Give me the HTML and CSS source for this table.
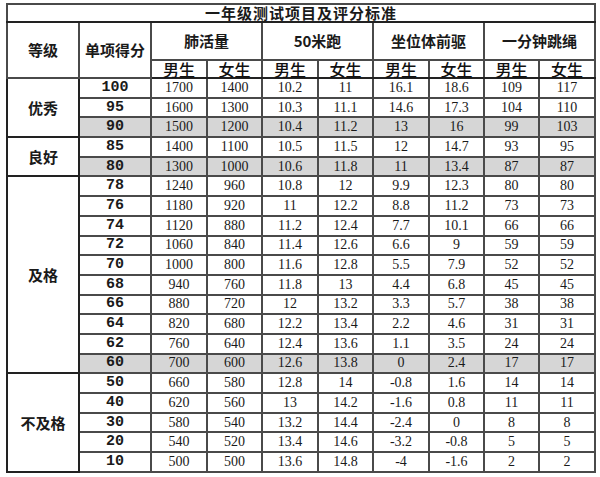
FILE: index.html
```html
<!DOCTYPE html>
<html lang="zh">
<head>
<meta charset="utf-8">
<title>一年级测试项目及评分标准</title>
<link rel="stylesheet" href="styles.css">
</head>
<body>
<table class="score">
  <colgroup>
    <col class="c-grade"><col class="c-score">
    <col class="c-a"><col class="c-b"><col class="c-a"><col class="c-b">
    <col class="c-a"><col class="c-b"><col class="c-b"><col class="c-a">
  </colgroup>
  <thead>
    <tr class="title"><th colspan="10">一年级测试项目及评分标准</th></tr>
    <tr class="h1">
      <th rowspan="2" class="hd">等级</th>
      <th rowspan="2" class="hd">单项得分</th>
      <th colspan="2" class="hd">肺活量</th>
      <th colspan="2" class="hd">50米跑</th>
      <th colspan="2" class="hd">坐位体前驱</th>
      <th colspan="2" class="hd">一分钟跳绳</th>
    </tr>
    <tr class="h2">
      <th>男生</th><th>女生</th><th>男生</th><th>女生</th>
      <th>男生</th><th>女生</th><th>男生</th><th>女生</th>
    </tr>
  </thead>
  <tbody>
    <tr><td rowspan="3" class="grade">优秀</td><td class="pts">100</td><td>1700</td><td>1400</td><td>10.2</td><td>11</td><td>16.1</td><td>18.6</td><td>109</td><td>117</td></tr>
    <tr><td class="pts">95</td><td>1600</td><td>1300</td><td>10.3</td><td>11.1</td><td>14.6</td><td>17.3</td><td>104</td><td>110</td></tr>
    <tr class="hl"><td class="pts">90</td><td>1500</td><td>1200</td><td>10.4</td><td>11.2</td><td>13</td><td>16</td><td>99</td><td>103</td></tr>
    <tr><td rowspan="2" class="grade">良好</td><td class="pts">85</td><td>1400</td><td>1100</td><td>10.5</td><td>11.5</td><td>12</td><td>14.7</td><td>93</td><td>95</td></tr>
    <tr class="hl"><td class="pts">80</td><td>1300</td><td>1000</td><td>10.6</td><td>11.8</td><td>11</td><td>13.4</td><td>87</td><td>87</td></tr>
    <tr><td rowspan="10" class="grade">及格</td><td class="pts">78</td><td>1240</td><td>960</td><td>10.8</td><td>12</td><td>9.9</td><td>12.3</td><td>80</td><td>80</td></tr>
    <tr><td class="pts">76</td><td>1180</td><td>920</td><td>11</td><td>12.2</td><td>8.8</td><td>11.2</td><td>73</td><td>73</td></tr>
    <tr><td class="pts">74</td><td>1120</td><td>880</td><td>11.2</td><td>12.4</td><td>7.7</td><td>10.1</td><td>66</td><td>66</td></tr>
    <tr><td class="pts">72</td><td>1060</td><td>840</td><td>11.4</td><td>12.6</td><td>6.6</td><td>9</td><td>59</td><td>59</td></tr>
    <tr><td class="pts">70</td><td>1000</td><td>800</td><td>11.6</td><td>12.8</td><td>5.5</td><td>7.9</td><td>52</td><td>52</td></tr>
    <tr><td class="pts">68</td><td>940</td><td>760</td><td>11.8</td><td>13</td><td>4.4</td><td>6.8</td><td>45</td><td>45</td></tr>
    <tr><td class="pts">66</td><td>880</td><td>720</td><td>12</td><td>13.2</td><td>3.3</td><td>5.7</td><td>38</td><td>38</td></tr>
    <tr><td class="pts">64</td><td>820</td><td>680</td><td>12.2</td><td>13.4</td><td>2.2</td><td>4.6</td><td>31</td><td>31</td></tr>
    <tr><td class="pts">62</td><td>760</td><td>640</td><td>12.4</td><td>13.6</td><td>1.1</td><td>3.5</td><td>24</td><td>24</td></tr>
    <tr class="hl"><td class="pts">60</td><td>700</td><td>600</td><td>12.6</td><td>13.8</td><td>0</td><td>2.4</td><td>17</td><td>17</td></tr>
    <tr><td rowspan="5" class="grade">不及格</td><td class="pts">50</td><td>660</td><td>580</td><td>12.8</td><td>14</td><td>-0.8</td><td>1.6</td><td>14</td><td>14</td></tr>
    <tr><td class="pts">40</td><td>620</td><td>560</td><td>13</td><td>14.2</td><td>-1.6</td><td>0.8</td><td>11</td><td>11</td></tr>
    <tr><td class="pts">30</td><td>580</td><td>540</td><td>13.2</td><td>14.4</td><td>-2.4</td><td>0</td><td>8</td><td>8</td></tr>
    <tr><td class="pts">20</td><td>540</td><td>520</td><td>13.4</td><td>14.6</td><td>-3.2</td><td>-0.8</td><td>5</td><td>5</td></tr>
    <tr><td class="pts">10</td><td>500</td><td>500</td><td>13.6</td><td>14.8</td><td>-4</td><td>-1.6</td><td>2</td><td>2</td></tr>
  </tbody>
</table>
</body>
</html>
```
FILE: styles.css
```css
html, body {
  margin: 0;
  padding: 0;
  background: #ffffff;
}
body {
  padding: 3px 0 0 6px;
}
.score {
  border-collapse: collapse;
  table-layout: fixed;
  width: 588px;
  border: 2px solid #111;
  font-family: "Liberation Serif", "Noto Sans CJK SC", serif;
  color: #1a1a1a;
}
.c-grade, .c-score { width: 72px; }
.c-a { width: 56px; }
.c-b { width: 55px; }
.score th, .score td {
  border: 2px solid #4a4a4a;
  padding: 0;
  text-align: center;
  vertical-align: middle;
  line-height: 16px;
  white-space: nowrap;
}
.score tbody tr {
  height: 19.7px;
}
.score td {
  font-size: 14px;
}
.title {
  height: 18px;
}
.title th {
  font-family: "Noto Sans CJK SC", sans-serif;
  font-size: 15px;
  font-weight: bold;
  letter-spacing: 1px;
  border-bottom-color: #222;
}
.h1 {
  height: 38px;
}
.hd {
  font-family: "Noto Sans CJK SC", sans-serif;
  font-size: 15px;
  font-weight: bold;
}
.h2 {
  height: 18px;
}
.h2 th {
  font-family: "Noto Sans CJK SC", sans-serif;
  font-size: 16px;
  font-weight: 500;
  color: #111;
  border-bottom-color: #222;
}
.score td.grade {
  font-family: "Noto Sans CJK SC", sans-serif;
  font-size: 15px;
  font-weight: bold;
  border-color: #222;
}
.score td.pts {
  font-family: "Liberation Mono", monospace;
  font-size: 15px;
  font-weight: bold;
}
.hl td {
  background: #d6d6d6;
}
```
